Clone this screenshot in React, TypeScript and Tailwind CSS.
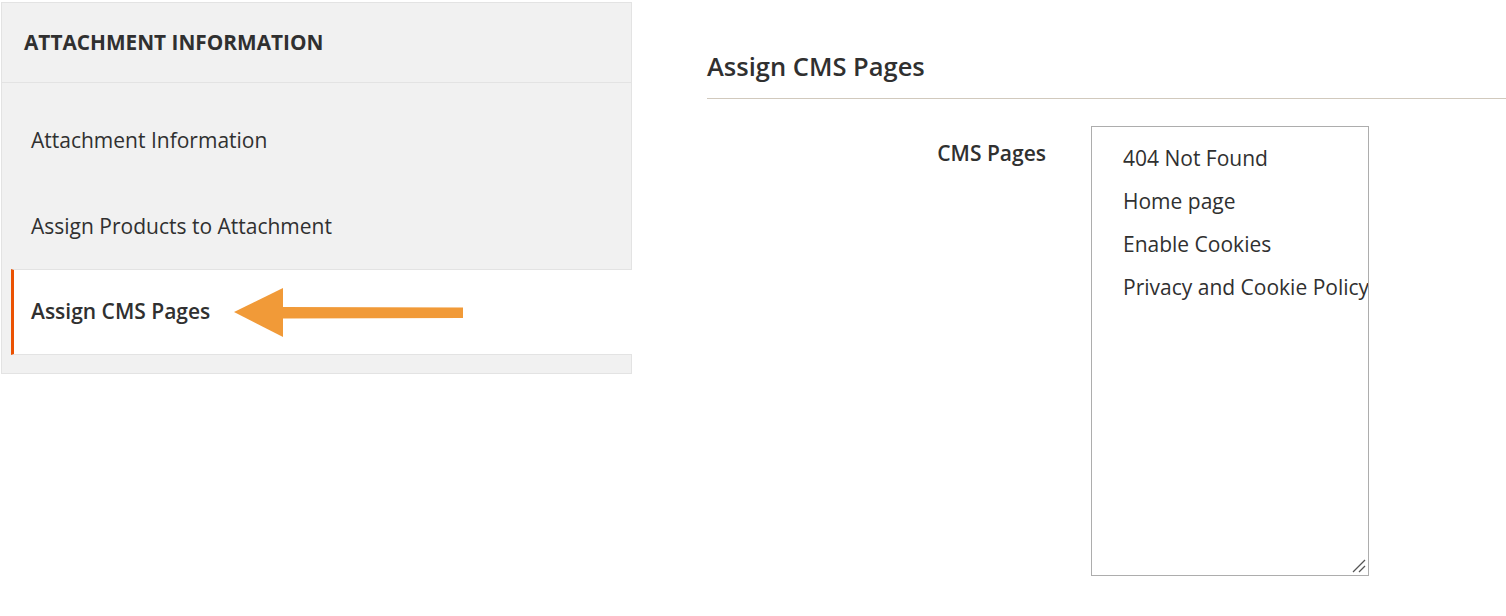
import React from 'react';

const tabs = [
    { label: 'Attachment Information', active: false },
    { label: 'Assign Products to Attachment', active: false },
    { label: 'Assign CMS Pages', active: true },
];

const cmsPages = ['404 Not Found', 'Home page', 'Enable Cookies', 'Privacy and Cookie Policy'];

const Arrow = () => (
    <svg width="232" height="52" viewBox="0 0 232 52" className="absolute left-[232px] top-[287px]">
        <polygon points="2,25 51,1 51,50" fill="#f19a38" />
        <polygon points="50,20 231,20.5 231,31 50,31.5" fill="#f19a38" />
    </svg>
);

const App: React.FC = () => {
    return (
        <div
            className="relative flex w-[1506px] h-[616px] bg-white text-[#303030]"
            style={{ fontFamily: '"Open Sans", "Noto Sans", sans-serif' }}
        >
            <div className="ml-[1px] mt-[2px] w-[631px] self-start border border-[#e3e3e3] bg-[#f1f1f1]">
                <div className="h-[80px] flex items-center pl-[22px] border-b border-[#e3e3e3]">
                    <h2 className="text-[20.8px] font-bold uppercase text-[#303030]">
                        Attachment Information
                    </h2>
                </div>
                <ul className="pt-[14px] pb-[18px]">
                    {tabs.map((tab) => (
                        <li
                            key={tab.label}
                            className={`ml-[9px] h-[86px] flex items-center border-l-[3px] pl-[17px] text-[21px] ${
                                tab.active
                                    ? 'border-[#eb5202] bg-white font-semibold -mr-px border-t border-t-[#e3e3e3] border-b border-b-[#e3e3e3]'
                                    : 'border-transparent pt-[2px]'
                            }`}
                        >
                            {tab.label}
                        </li>
                    ))}
                </ul>
            </div>

            <Arrow />

            <div className="ml-[75px] flex-1">
                <div className="mt-[48px] pb-[14px] border-b border-[#d1c9bd]">
                    <h3 className="text-[25.5px] font-semibold leading-[36px] text-[#303030]">Assign CMS Pages</h3>
                </div>
                <div className="flex mt-[27px]">
                    <label className="w-[384px] pr-[45px] pt-[12px] text-right text-[21px] font-semibold leading-[30px]">
                        CMS Pages
                    </label>
                    <div className="relative w-[278px] h-[450px] border border-[#adadad] overflow-hidden bg-white">
                        <ul className="pt-[16px] pl-[31px]">
                            {cmsPages.map((page) => (
                                <li key={page} className="h-[43px] leading-[31px] text-[21px] whitespace-nowrap">
                                    {page}
                                </li>
                            ))}
                        </ul>
                        <svg width="14" height="14" viewBox="0 0 14 14" className="absolute right-[2px] bottom-[2px]">
                            <line x1="1" y1="13" x2="13" y2="1" stroke="#555" strokeWidth="1.3" />
                            <line x1="7" y1="13" x2="13" y2="7" stroke="#555" strokeWidth="1.3" />
                        </svg>
                    </div>
                </div>
            </div>
        </div>
    );
};

export default App;
